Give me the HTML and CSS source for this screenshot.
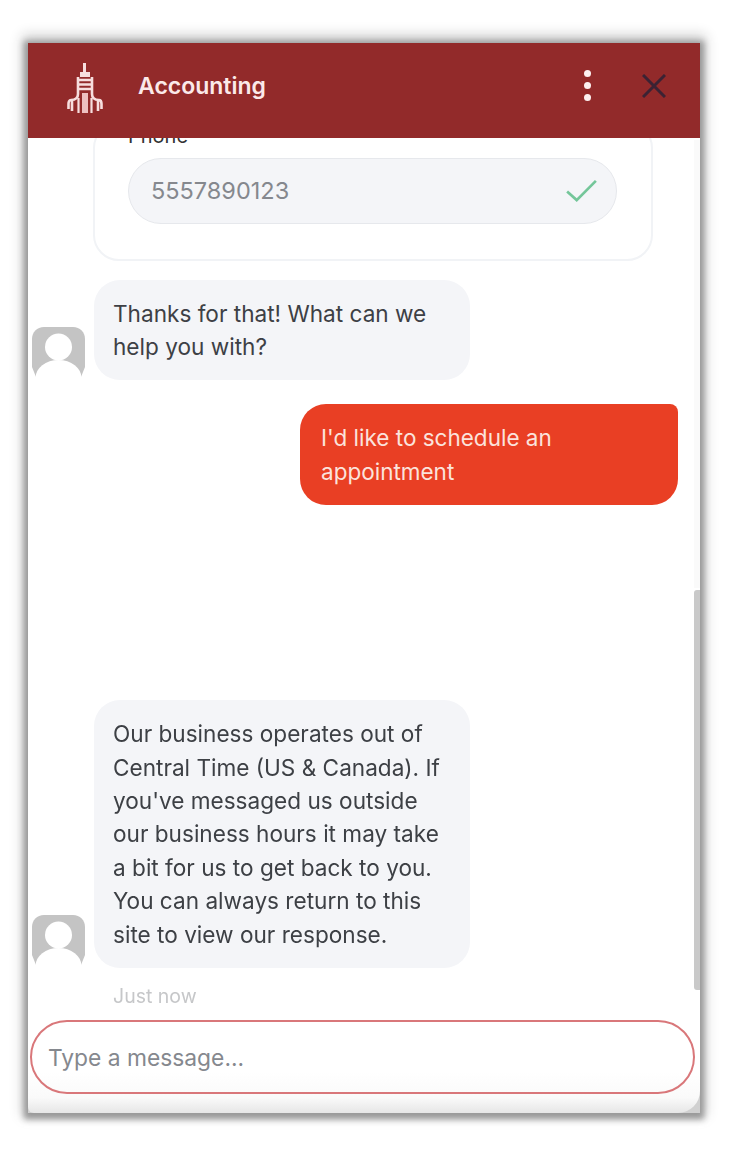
FILE: index.html
```html
<!DOCTYPE html>
<html lang="en">
<head>
    <meta charset="UTF-8">
    <meta name="viewport" content="width=device-width, initial-scale=1.0">
    <title>Accounting chat</title>
    <link rel="stylesheet" href="styles.css">
</head>
<body>

<div class="widget">
    <!-- Header -->
    <div class="header">
        <svg class="logo" viewBox="0 0 36 50" fill="none" stroke="#f7dede" stroke-width="2.6">
            <path d="M17.500 0V10" stroke-width="3"/>
            <path d="M13 9H23V14H13Z" fill="#f7dede" stroke="none"/>
            <path d="M10 17H26M10 21.500H26M10 26H26" stroke-width="2.4"/>
            <path d="M11 14V31M25 14V31"/>
            <path d="M15 30H21V50H15Z" fill="#eec0c0" stroke="none"/>
            <path d="M11 31C11 36 7 37 4 37C2 37 1.500 39 1.500 41V46M5 37V48"/>
            <path d="M25 31C25 36 29 37 32 37C34 37 34.500 39 34.500 41V46M31 37V48"/>
            <path d="M11.500 35V50M24.500 35V50" stroke-width="2.2"/>
        </svg>
        <div class="title">Accounting</div>
        <div class="dots"><span></span><span></span><span></span></div>
        <svg class="close" viewBox="0 0 24 24" fill="none" stroke="#3b2233" stroke-width="3">
            <path d="M1 1L23 23M23 1L1 23"/>
        </svg>
    </div>

    <!-- Messages -->
    <div class="thread">
        <div class="form-card">
            <label class="field-label">Phone</label>
            <div class="field">
                <span>5557890123</span>
                <svg class="check" viewBox="0 0 32 24" fill="none" stroke="#74c69a" stroke-width="2.8">
                    <path d="M1 13L11 22L31 2"/>
                </svg>
            </div>
        </div>

        <div class="row first">
            <svg class="avatar" viewBox="0 0 53 53">
                <path d="M12 0H41C48 0 53 5 53 12V40L49 50H4L0 40V12C0 5 5 0 12 0Z" fill="#c4c4c4"/>
                <circle cx="26.500" cy="20" r="13.500" fill="#fff"/>
                <ellipse cx="26.500" cy="51" rx="23" ry="18" fill="#fff"/>
                <rect x="0" y="50" width="53" height="3" fill="#fff"/>
            </svg>
            <div class="bubble">Thanks for that! What can we help you with?</div>
        </div>

        <div class="bubble mine">I'd like to schedule an appointment</div>

        <div class="row last">
            <svg class="avatar" viewBox="0 0 53 53">
                <path d="M12 0H41C48 0 53 5 53 12V40L49 50H4L0 40V12C0 5 5 0 12 0Z" fill="#c4c4c4"/>
                <circle cx="26.500" cy="20" r="13.500" fill="#fff"/>
                <ellipse cx="26.500" cy="51" rx="23" ry="18" fill="#fff"/>
                <rect x="0" y="50" width="53" height="3" fill="#fff"/>
            </svg>
            <div class="bubble">Our business operates out of Central Time (US &amp; Canada). If you've messaged us outside our business hours it may take a bit for us to get back to you. You can always return to this site to view our response.</div>
        </div>

        <div class="timestamp">Just now</div>
        <div class="scrollbar-track"></div>
        <div class="scrollbar"></div>
    </div>

    <!-- Input -->
    <div class="composer">
        <div class="input">Type a message...</div>
    </div>
</div>

</body>
</html>
```

FILE: styles.css
```css
body {
    margin: 0;
    padding: 0;
    background: #fff;
    font-family: Inter, "Liberation Sans", sans-serif;
}

.widget {
    width: 672px;
    height: 1070px;
    margin: 43px 0 41px 28px;
    display: flex;
    flex-direction: column;
    background: #d0d0d0;
    box-shadow: 0 2px 6px 4px #999, 0 -2px 12px 6px rgba(0, 0, 0, 0.2);
    filter: blur(0.6px);
}

.header {
    height: 95px;
    box-sizing: border-box;
    padding-bottom: 10px;
    flex-shrink: 0;
    display: flex;
    align-items: center;
    background-color: #922a2a;
    position: relative;
    z-index: 1;
}

.logo {
    width: 36px;
    height: 50px;
    margin: 4px 0 0 39px;
}

.title {
    margin-left: 35px;
    font-size: 23px;
    font-weight: 600;
    color: #fbe9e9;
    flex: 1;
}

.dots {
    display: flex;
    flex-direction: column;
    gap: 5px;
    margin-right: 51px;
}

.dots span {
    width: 7px;
    height: 7px;
    border-radius: 50%;
    background-color: #fdf0f0;
}

.close {
    width: 24px;
    height: 24px;
    margin-right: 34px;
}

.thread {
    flex: 1;
    min-height: 0;
    overflow: hidden;
    position: relative;
    display: flex;
    flex-direction: column;
    justify-content: flex-end;
    padding-bottom: 2px;
    background-color: #fff;
}

.form-card {
    flex-shrink: 0;
    margin: 0 47px 19px 65px;
    padding: 0 34px 35px 33px;
    border: 2px solid #f1f3f6;
    border-radius: 26px;
    color: #333;
}

.field-label {
    display: block;
    font-size: 20px;
    line-height: 24px;
    margin-bottom: 10px;
}

.field {
    height: 66px;
    padding: 0 19px 0 22px;
    display: flex;
    align-items: center;
    justify-content: space-between;
    box-sizing: border-box;
    background-color: #f4f5f8;
    border: 1px solid #e6e8ec;
    border-radius: 33px;
    font-size: 23.500px;
    color: #85888e;
}

.check {
    width: 31px;
    height: 23px;
}

.row {
    flex-shrink: 0;
    display: flex;
    align-items: flex-end;
    margin-left: 4px;
    gap: 9px;
}

.row.first {
    margin-bottom: 24px;
}

.row.last {
    margin-top: 195px;
}

.avatar {
    width: 53px;
    height: 53px;
    flex-shrink: 0;
}

.bubble {
    width: 376px;
    box-sizing: border-box;
    padding: 17px 19px;
    background-color: #f4f5f8;
    border-radius: 26px;
    font-size: 22.600px;
    line-height: 33.400px;
    color: #3d4045;
}

.bubble.mine {
    flex-shrink: 0;
    width: 378px;
    margin-left: 272px;
    padding: 17px 21px;
    background-color: #e93f24;
    border-radius: 26px 8px 26px 26px;
    font-size: 22.500px;
    color: #fbe3dc;
}

.timestamp {
    flex-shrink: 0;
    margin: 15px 0 0 85px;
    font-size: 19.500px;
    line-height: 26px;
    color: #c6c7c9;
}

.scrollbar-track {
    position: absolute;
    right: 0;
    top: 2px;
    width: 6px;
    height: 448px;
    background-color: #fafafa;
}

.scrollbar {
    position: absolute;
    right: 0;
    top: 452px;
    width: 6px;
    height: 400px;
    background-color: #c9c9c9;
    border-radius: 3px 0 0 3px;
}

.composer {
    height: 102px;
    flex-shrink: 0;
    box-sizing: border-box;
    padding: 9px 5px 0 2px;
    background: linear-gradient(#fff 60%, #fafafa 85%, #e6e6e6 100%);
    border-radius: 0 0 22px 6px;
}

.input {
    height: 74px;
    box-sizing: border-box;
    padding-left: 16px;
    display: flex;
    align-items: center;
    border: 2px solid #d9777a;
    border-radius: 37px;
    font-size: 22.800px;
    color: #85888e;
}
```
